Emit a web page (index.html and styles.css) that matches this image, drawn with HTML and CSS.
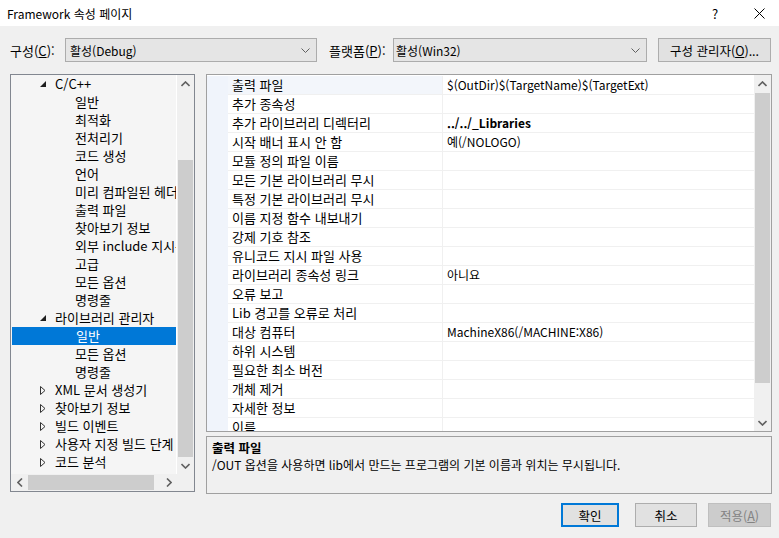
FILE: index.html
```html
<!DOCTYPE html>
<html lang="ko">
<head>
<meta charset="utf-8">
<title>Framework 속성 페이지</title>
<link rel="stylesheet" href="styles.css">
</head>
<body>
<div class="window">
  <div class="titlebar">
    <span class="title">Framework 속성 페이지</span>
    <span class="tb-help">?</span>
    <span class="tb-close"><svg width="11" height="11" viewBox="0 0 11 11"><path d="M0.5 0.5L10.5 10.5M10.5 0.5L0.5 10.5" stroke="#000" stroke-width="1"/></svg></span>
  </div>

  <div class="toolbar">
    <span class="lbl lbl-cfg">구성(<u>C</u>):</span>
    <div class="combo combo-cfg"><span>활성(Debug)</span><svg class="chev" width="9" height="5" viewBox="0 0 9 5"><path d="M0.5 0.5L4.5 4.5L8.5 0.5" fill="none" stroke="#606060"/></svg></div>
    <span class="lbl lbl-plat">플랫폼(<u>P</u>):</span>
    <div class="combo combo-plat"><span>활성(Win32)</span><svg class="chev" width="9" height="5" viewBox="0 0 9 5"><path d="M0.5 0.5L4.5 4.5L8.5 0.5" fill="none" stroke="#606060"/></svg></div>
    <button class="btn btn-cfgmgr">구성 관리자(<u>O</u>)...</button>
  </div>

  <div class="main">
    <div class="tree">
      <div class="tree-body">
        <div class="tree-list">
          <div class="ti l1"><span class="tg"><svg width="6" height="6" viewBox="0 0 6 6"><path d="M6 0L6 6L0 6Z" fill="#1e1e1e"/></svg></span>C/C++</div>
          <div class="ti l2">일반</div>
          <div class="ti l2">최적화</div>
          <div class="ti l2">전처리기</div>
          <div class="ti l2">코드 생성</div>
          <div class="ti l2">언어</div>
          <div class="ti l2">미리 컴파일된 헤더</div>
          <div class="ti l2">출력 파일</div>
          <div class="ti l2">찾아보기 정보</div>
          <div class="ti l2">외부 include 지시문</div>
          <div class="ti l2">고급</div>
          <div class="ti l2">모든 옵션</div>
          <div class="ti l2">명령줄</div>
          <div class="ti l1"><span class="tg"><svg width="6" height="6" viewBox="0 0 6 6"><path d="M6 0L6 6L0 6Z" fill="#1e1e1e"/></svg></span>라이브러리 관리자</div>
          <div class="ti l2 sel">일반</div>
          <div class="ti l2">모든 옵션</div>
          <div class="ti l2">명령줄</div>
          <div class="ti l1"><span class="tg"><svg width="6" height="9" viewBox="0 0 6 9"><path d="M0.5 0.5L5 4.5L0.5 8.5Z" fill="none" stroke="#333"/></svg></span>XML 문서 생성기</div>
          <div class="ti l1"><span class="tg"><svg width="6" height="9" viewBox="0 0 6 9"><path d="M0.5 0.5L5 4.5L0.5 8.5Z" fill="none" stroke="#333"/></svg></span>찾아보기 정보</div>
          <div class="ti l1"><span class="tg"><svg width="6" height="9" viewBox="0 0 6 9"><path d="M0.5 0.5L5 4.5L0.5 8.5Z" fill="none" stroke="#333"/></svg></span>빌드 이벤트</div>
          <div class="ti l1"><span class="tg"><svg width="6" height="9" viewBox="0 0 6 9"><path d="M0.5 0.5L5 4.5L0.5 8.5Z" fill="none" stroke="#333"/></svg></span>사용자 지정 빌드 단계</div>
          <div class="ti l1"><span class="tg"><svg width="6" height="9" viewBox="0 0 6 9"><path d="M0.5 0.5L5 4.5L0.5 8.5Z" fill="none" stroke="#333"/></svg></span>코드 분석</div>
        </div>
        <div class="vscroll tree-vs">
          <span class="arr"><svg width="9" height="6" viewBox="0 0 9 6"><path d="M0.5 5L4.5 1L8.5 5" fill="none" stroke="#606060" stroke-width="1.6"/></svg></span>
          <span class="track"><span class="thumb"></span></span>
          <span class="arr"><svg width="9" height="6" viewBox="0 0 9 6"><path d="M0.5 1L4.5 5L8.5 1" fill="none" stroke="#606060" stroke-width="1.6"/></svg></span>
        </div>
      </div>
      <div class="hs-row">
        <div class="hscroll">
          <span class="harr"><svg width="6" height="9" viewBox="0 0 6 9"><path d="M5 0.5L1 4.5L5 8.5" fill="none" stroke="#606060" stroke-width="1.6"/></svg></span>
          <span class="htrack"><span class="hthumb"></span></span>
          <span class="harr"><svg width="6" height="9" viewBox="0 0 6 9"><path d="M1 0.5L5 4.5L1 8.5" fill="none" stroke="#606060" stroke-width="1.6"/></svg></span>
        </div>
        <div class="corner"></div>
      </div>
    </div>

    <div class="right">
      <div class="grid">
        <div class="grid-rows">
          <div class="gr first"><span class="gl"></span><span class="gn">출력 파일</span><span class="gv">$(OutDir)$(TargetName)$(TargetExt)</span></div>
          <div class="gr"><span class="gl"></span><span class="gn">추가 종속성</span><span class="gv"></span></div>
          <div class="gr"><span class="gl"></span><span class="gn">추가 라이브러리 디렉터리</span><span class="gv bold">../../_Libraries</span></div>
          <div class="gr"><span class="gl"></span><span class="gn">시작 배너 표시 안 함</span><span class="gv">예(/NOLOGO)</span></div>
          <div class="gr"><span class="gl"></span><span class="gn">모듈 정의 파일 이름</span><span class="gv"></span></div>
          <div class="gr"><span class="gl"></span><span class="gn">모든 기본 라이브러리 무시</span><span class="gv"></span></div>
          <div class="gr"><span class="gl"></span><span class="gn">특정 기본 라이브러리 무시</span><span class="gv"></span></div>
          <div class="gr"><span class="gl"></span><span class="gn">이름 지정 함수 내보내기</span><span class="gv"></span></div>
          <div class="gr"><span class="gl"></span><span class="gn">강제 기호 참조</span><span class="gv"></span></div>
          <div class="gr"><span class="gl"></span><span class="gn">유니코드 지시 파일 사용</span><span class="gv"></span></div>
          <div class="gr"><span class="gl"></span><span class="gn">라이브러리 종속성 링크</span><span class="gv">아니요</span></div>
          <div class="gr"><span class="gl"></span><span class="gn">오류 보고</span><span class="gv"></span></div>
          <div class="gr"><span class="gl"></span><span class="gn">Lib 경고를 오류로 처리</span><span class="gv"></span></div>
          <div class="gr"><span class="gl"></span><span class="gn">대상 컴퓨터</span><span class="gv">MachineX86(/MACHINE:X86)</span></div>
          <div class="gr"><span class="gl"></span><span class="gn">하위 시스템</span><span class="gv"></span></div>
          <div class="gr"><span class="gl"></span><span class="gn">필요한 최소 버전</span><span class="gv"></span></div>
          <div class="gr"><span class="gl"></span><span class="gn">개체 제거</span><span class="gv"></span></div>
          <div class="gr"><span class="gl"></span><span class="gn">자세한 정보</span><span class="gv"></span></div>
          <div class="gr"><span class="gl"></span><span class="gn">이름</span><span class="gv"></span></div>
        </div>
        <div class="vscroll grid-vs">
          <span class="arr"><svg width="9" height="6" viewBox="0 0 9 6"><path d="M0.5 5L4.5 1L8.5 5" fill="none" stroke="#606060" stroke-width="1.6"/></svg></span>
          <span class="track"><span class="thumb"></span></span>
          <span class="arr"><svg width="9" height="6" viewBox="0 0 9 6"><path d="M0.5 1L4.5 5L8.5 1" fill="none" stroke="#606060" stroke-width="1.6"/></svg></span>
        </div>
      </div>
      <div class="desc">
        <div class="desc-title">출력 파일</div>
        <div class="desc-text">/OUT 옵션을 사용하면 lib에서 만드는 프로그램의 기본 이름과 위치는 무시됩니다.</div>
      </div>
    </div>
  </div>

  <div class="buttons">
    <button class="btn btn-ok">확인</button>
    <button class="btn btn-cancel">취소</button>
    <button class="btn btn-apply" disabled>적용(<u>A</u>)</button>
  </div>
</div>
</body>
</html>
```

FILE: styles.css
```css
* { box-sizing: border-box; }
html, body { margin: 0; padding: 0; }
body {
  background: #f0f0f0;
  font-family: "Noto Sans CJK KR", "Noto Sans", sans-serif;
  font-size: 12px;
  color: #000;
}
.window {
  width: 779px;
  height: 538px;
  overflow: hidden;
  display: flex;
  flex-direction: column;
}
u { text-decoration: underline; text-underline-offset: 1px; }

/* title bar */
.titlebar {
  height: 26px;
  background: #fff;
  display: flex;
  align-items: center;
  padding-left: 7px;
  flex: none;
}
.title { flex: 1; font-size: 12px; }
.tb-help { width: 10px; margin-right: 32px; font-size: 13px; }
.tb-close { width: 11px; height: 11px; margin-right: 14px; display: flex; }

/* toolbar */
.toolbar {
  margin-top: 12px;
  height: 24px;
  display: flex;
  align-items: center;
  padding-left: 10px;
  flex: none;
}
.lbl { white-space: nowrap; font-size: 13px; }
.lbl-cfg { width: 55px; }
.lbl-plat { width: 64px; margin-left: 12px; }
.combo {
  height: 24px;
  background: #e5e5e5;
  border: 1px solid #acacac;
  display: flex;
  align-items: center;
  justify-content: space-between;
  padding: 0 6px 0 4px;
}
.combo-cfg { width: 252px; }
.combo-plat { width: 254px; padding-left: 2px; }
.chev { display: block; }
.btn {
  font-family: inherit;
  font-size: 12.5px;
  color: #000;
  background: #e1e1e1;
  border: 1px solid #adadad;
  padding: 0;
  height: 24px;
}
.btn-cfgmgr { margin-left: 11px; width: 113px; }

/* main */
.main {
  margin-top: 12px;
  height: 420px;
  display: flex;
  padding-left: 10px;
  flex: none;
}
.tree {
  width: 185px;
  height: 418px;
  border: 1px solid #828790;
  background: #f5f5f5;
  display: flex;
  flex-direction: column;
  font-size: 13px;
}
.tree-body { height: 399px; display: flex; }
.tree-list {
  width: 166px;
  overflow: hidden;
  border-right: 1px solid #fff;
}
.ti {
  height: 18px;
  line-height: 18px;
  white-space: nowrap;
  display: flex;
  align-items: center;
}
.ti.l1 { padding-left: 29px; }
.ti.l2 { padding-left: 64px; }
.ti.sel { background: #0078d7; color: #fff; margin-left: 1px; }
.tg { width: 15px; display: flex; align-items: center; flex: none; }

.vscroll {
  width: 17px;
  background: #f0f0f0;
  display: flex;
  flex-direction: column;
  flex: none;
}
.arr { height: 17px; display: flex; align-items: center; justify-content: center; flex: none; }
.track { flex: 1; display: flex; flex-direction: column; padding: 0 1px; }
.thumb { background: #cdcdcd; display: block; }
.tree-vs .track { padding-top: 68px; }
.tree-vs .thumb { height: 297px; }
.grid-vs .track { padding-top: 1px; }
.grid-vs .thumb { height: 290px; }

.hs-row { height: 17px; display: flex; flex: none; }
.hscroll {
  width: 166px;
  background: #f0f0f0;
  display: flex;
  align-items: stretch;
}
.harr { width: 17px; display: flex; align-items: center; justify-content: center; flex: none; }
.htrack { flex: 1; display: flex; padding: 1px 0; }
.hthumb { width: 126px; background: #cdcdcd; display: block; }
.corner { flex: 1; background: #f0f0f0; }

/* right */
.right {
  margin-left: 11px;
  width: 566px;
  display: flex;
  flex-direction: column;
}
.grid {
  height: 358px;
  border: 1px solid #a0a0a0;
  background: #fff;
  display: flex;
  flex: none;
}
.grid-rows { flex: 1; overflow: hidden; padding-top: 1px; }
.gr {
  height: 19px;
  display: flex;
  white-space: nowrap;
}
.gl { width: 21px; background: #f0f4fb; flex: none; }
.gn {
  width: 215px;
  flex: none;
  padding-left: 4px;
  line-height: 18px;
  font-size: 13px;
  border-bottom: 1px solid #f0f0f0;
  border-right: 1px solid #f0f0f0;
}
.gv {
  flex: 1;
  padding-left: 4px;
  line-height: 18px;
  border-bottom: 1px solid #f0f0f0;
}
.gr.first .gn { background: #f3f6fb; }
.bold { font-weight: bold; }

.desc {
  margin-top: 4px;
  height: 58px;
  border: 1px solid #a0a0a0;
  background: #f0f0f0;
  padding: 2px 5px;
  line-height: 17px;
}
.desc-title { font-weight: bold; font-size: 12.5px; }

/* buttons */
.buttons {
  margin-top: 9px;
  display: flex;
  justify-content: flex-end;
  padding-right: 8px;
  flex: none;
}
.btn-ok { width: 58px; border: 2px solid #0078d7; }
.btn-cancel { width: 62px; margin-left: 16px; }
.btn-apply { width: 63px; margin-left: 11px; background: #cccccc; border-color: #bfbfbf; color: #838383; }
```
